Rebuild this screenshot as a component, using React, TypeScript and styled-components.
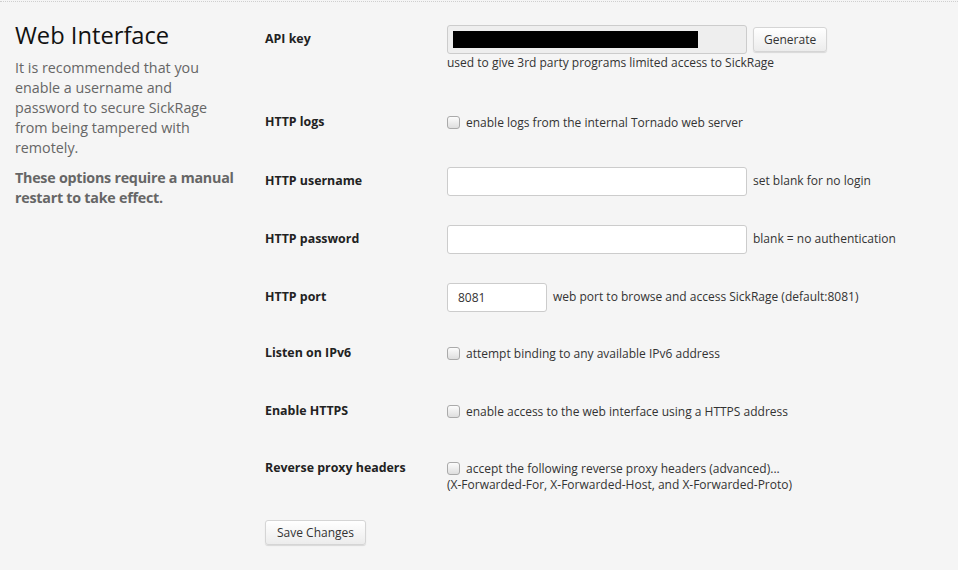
import React from "react";
import styled, { createGlobalStyle } from "styled-components";

const Global = createGlobalStyle`
  html, body { margin: 0; padding: 0; background: #f5f5f5; }
  body { font-family: "Open Sans", "DejaVu Sans", sans-serif; color: #333; }
  * { box-sizing: border-box; }
`;

const Page = styled.div`
  width: 958px;
  height: 570px;
  padding-top: 1px;
  background: #f5f5f5;
`;

const Group = styled.div`
  display: flex;
  border-top: 1px dotted #cfcfcf;
  padding-top: 22px;
`;

const Desc = styled.div`
  width: 265px;
  padding-left: 15px;
  padding-right: 27px;
  flex-shrink: 0;
`;

const Title = styled.h3`
  margin: -3px 0 9px;
  font-size: 23.7px;
  font-weight: 400;
  line-height: 28px;
  color: #111;
`;

const DescText = styled.p<{ $bold?: boolean }>`
  margin: 0 0 10px;
  font-size: 14.3px;
  line-height: 20px;
  color: #666;
  font-weight: ${(p) => (p.$bold ? 700 : 400)};
  letter-spacing: ${(p) => (p.$bold ? "-0.25px" : "0")};
`;

const List = styled.div`
  display: flex;
  flex-direction: column;
  flex: 1;
`;

const Row = styled.div<{ $mb?: number }>`
  display: flex;
  align-items: flex-start;
  margin-bottom: ${(p) => p.$mb ?? 28}px;
`;

const Label = styled.div`
  width: 182px;
  flex-shrink: 0;
  font-size: 12.4px;
  font-weight: 700;
  line-height: 30px;
  color: #222;
`;

const Field = styled.div`
  display: flex;
  flex-direction: column;
`;

const Line = styled.div`
  display: flex;
  align-items: center;
  min-height: 30px;
  gap: 6px;
`;

const Input = styled.input<{ $w: number }>`
  width: ${(p) => p.$w}px;
  height: 29px;
  border: 1px solid #ccc;
  border-radius: 3px;
  background: #fff;
  font-family: "Open Sans", sans-serif;
  font-size: 12px;
  color: #333;
  padding: 0 10px;
  outline: none;
`;

const KeyBox = styled.div`
  width: 300px;
  height: 29px;
  border: 1px solid #ccc;
  border-radius: 3px;
  background: #eee;
  display: flex;
  align-items: center;
  padding-left: 5px;
`;

const Redacted = styled.div`
  width: 245px;
  height: 17px;
  background: #000;
`;

const Button = styled.button`
  font-family: "Open Sans", sans-serif;
  font-size: 12px;
  color: #333;
  height: 25px;
  padding: 0 10px;
  border: 1px solid #d5d5d5;
  border-radius: 3px;
  background: linear-gradient(#fff, #ececec);
  box-shadow: 0 1px 1px rgba(0, 0, 0, 0.12);
  cursor: pointer;
`;

const Help = styled.span`
  font-size: 12px;
  line-height: 18px;
  color: #333;
`;

const HelpBelow = styled.div`
  font-size: 12px;
  line-height: 18px;
  color: #333;
`;

const Check = styled.input.attrs({ type: "checkbox" })`
  appearance: none;
  width: 13px;
  height: 13px;
  margin: 0 6px 0 0;
  border: 1px solid #aaa;
  border-radius: 3px;
  background: linear-gradient(#fcfcfc, #dedede);
  flex-shrink: 0;
`;

const CheckLine = styled.label`
  display: flex;
  align-items: center;
  min-height: 30px;
  font-size: 12px;
  color: #333;
`;

const Sub = styled.div`
  font-size: 12px;
  line-height: 17px;
  color: #333;
  margin-top: -7px;
`;

const Submit = styled(Button)`
  align-self: flex-start;
  padding: 0 11px;
`;

export default function App() {
  return (
    <Page>
      <Global />
      <Group>
        <Desc>
          <Title>Web Interface</Title>
          <DescText>
            It is recommended that you enable a username and password to secure SickRage from
            being tampered with remotely.
          </DescText>
          <DescText $bold>These options require a manual restart to take effect.</DescText>
        </Desc>
        <List>
          <Row $mb={35}>
            <Label>API key</Label>
            <Field>
              <Line>
                <KeyBox>
                  <Redacted />
                </KeyBox>
                <Button>Generate</Button>
              </Line>
              <HelpBelow>used to give 3rd party programs limited access to SickRage</HelpBelow>
            </Field>
          </Row>
          <Row $mb={29}>
            <Label>HTTP logs</Label>
            <CheckLine>
              <Check />
              enable logs from the internal Tornado web server
            </CheckLine>
          </Row>
          <Row>
            <Label>HTTP username</Label>
            <Line>
              <Input $w={300} />
              <Help>set blank for no login</Help>
            </Line>
          </Row>
          <Row>
            <Label>HTTP password</Label>
            <Line>
              <Input $w={300} type="password" />
              <Help>blank = no authentication</Help>
            </Line>
          </Row>
          <Row $mb={26}>
            <Label>HTTP port</Label>
            <Line>
              <Input $w={100} defaultValue="8081" />
              <Help>web port to browse and access SickRage (default:8081)</Help>
            </Line>
          </Row>
          <Row>
            <Label>Listen on IPv6</Label>
            <CheckLine>
              <Check />
              attempt binding to any available IPv6 address
            </CheckLine>
          </Row>
          <Row $mb={27}>
            <Label>Enable HTTPS</Label>
            <CheckLine>
              <Check />
              enable access to the web interface using a HTTPS address
            </CheckLine>
          </Row>
          <Row $mb={27}>
            <Label>Reverse proxy headers</Label>
            <Field>
              <CheckLine>
                <Check />
                accept the following reverse proxy headers (advanced)...
              </CheckLine>
              <Sub>(X-Forwarded-For, X-Forwarded-Host, and X-Forwarded-Proto)</Sub>
            </Field>
          </Row>
          <Submit>Save Changes</Submit>
        </List>
      </Group>
    </Page>
  );
}
